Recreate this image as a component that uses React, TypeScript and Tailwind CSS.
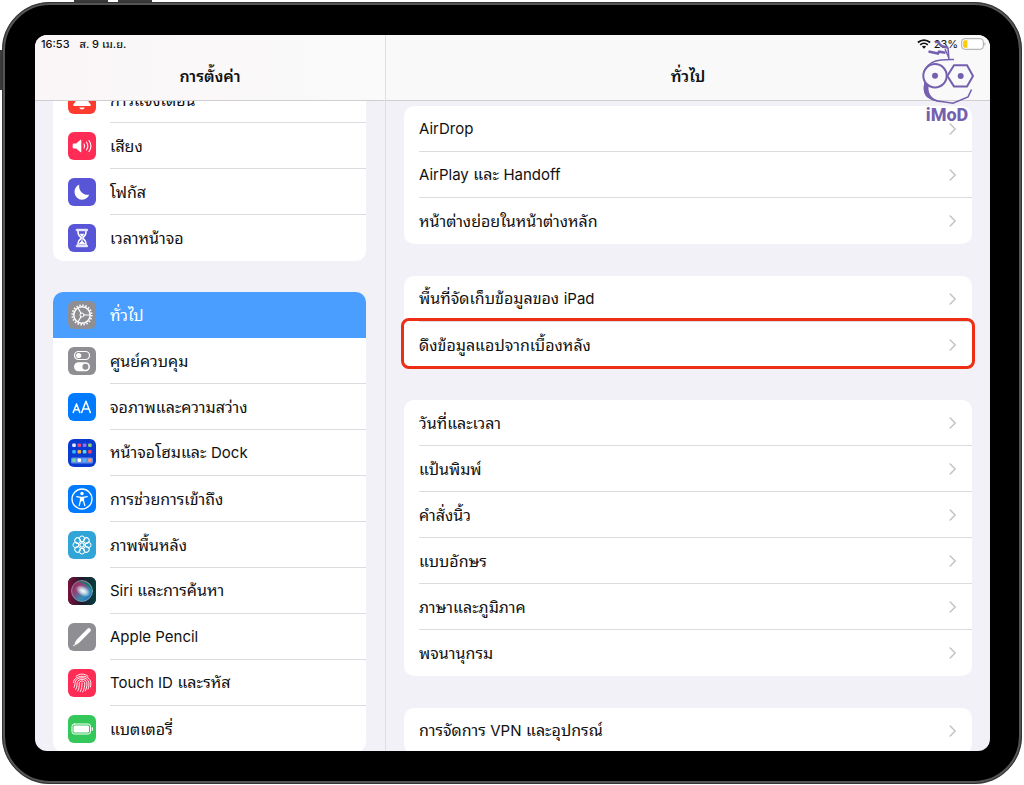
import React from 'react';
import clsx from 'clsx';

interface IconProps {
  children: React.ReactNode;
  className?: string;
}

const Tile: React.FC<IconProps> = ({ children, className }) => (
  <svg
    viewBox="0 0 28 28"
    className={clsx('size-7 shrink-0 rounded-md', className)}
    fill="none"
    stroke="#fff"
    strokeLinecap="round"
    strokeLinejoin="round"
    aria-hidden="true"
  >
    {children}
  </svg>
);

const BellIcon = () => (
  <Tile className="bg-[#ff3b30]">
    <path
      d="M14 4.5c-4 0-5.5 3-5.5 6.500 0 4-1.500 5.500-3 7.200-.6.700-.2 1.800.8 1.800h15.400c1 0 1.400-1.100.8-1.800-1.500-1.700-3-3.200-3-7.200 0-3.500-1.500-6.500-5.500-6.500z"
      fill="#fff"
      stroke="none"
    />
    <path d="M11.300 21.500h5.400c-.4 1.300-1.400 2-2.700 2s-2.300-.7-2.700-2z" fill="#fff" stroke="none" />
  </Tile>
);

const SoundIcon = () => (
  <Tile className="bg-[#ff2d55]">
    <path
      d="M5.500 11.500h2.700l4.100-3.600c.5-.4 1-.2 1 .5v11.200c0 .7-.5.900-1 .5l-4.100-3.600H5.500c-.5 0-.8-.3-.8-.8v-3.400c0-.5.300-.8.800-.8z"
      fill="#fff"
      stroke="none"
    />
    <path d="M16 12c.8 1.200.8 2.800 0 4M18.500 10.200c1.600 2.300 1.600 5.300 0 7.600M21 8.500c2.400 3.400 2.400 7.600 0 11" strokeWidth="1.100" />
  </Tile>
);

const MoonIcon = () => (
  <Tile className="bg-[#5856d6]">
    <path
      d="M11.200 6.500c-.8 6 3.300 11 10 10.300-1.200 3-3.800 4.900-7 4.900A7.800 7.800 0 0 1 6.500 14c0-3.400 1.900-6.400 4.700-7.500z"
      fill="#fff"
      stroke="none"
    />
  </Tile>
);

const HourglassIcon = () => (
  <Tile className="bg-[#5856d6]">
    <path d="M8.500 5.200h11v1.600h-11zM8.500 21.200h11v1.600h-11z" fill="#fff" strokeWidth=".6" />
    <path
      d="M10 7.500c0 3 .7 4.300 2.600 5.700.6.500.6 1.100 0 1.600-1.900 1.400-2.600 2.700-2.600 5.700M18 7.500c0 3-.7 4.300-2.600 5.700-.6.500-.6 1.100 0 1.600 1.900 1.400 2.600 2.700 2.600 5.700"
      strokeWidth="1.500"
    />
    <path d="M11.800 9.700h4.400c-.4 1.200-1 2-2.200 2.800-1.200-.8-1.800-1.600-2.200-2.800zM13.500 12h1v5l2.500 2.500v1h-6v-1l2.500-2.500z" fill="#fff" stroke="none" />
  </Tile>
);

const GearIcon = () => (
  <Tile className="bg-[#8e8e93]">
    <circle cx="14" cy="14" r="9.700" strokeWidth="1.800" strokeDasharray="1.500 1.547" strokeLinecap="butt" />
    <circle cx="14" cy="14" r="8.200" strokeWidth="1.500" />
    <circle cx="14" cy="14" r="2" strokeWidth="1" />
    <path d="M16 14h5.800M13 12.300 10.100 7.200M13 15.700l-2.900 5.100" strokeWidth="1.200" />
  </Tile>
);

const TogglesIcon = () => (
  <Tile className="bg-[#8e8e93]">
    <rect x="6.500" y="4.500" width="15" height="8" rx="4" strokeWidth="1.200" />
    <circle cx="10.700" cy="8.500" r="2.600" fill="#fff" stroke="none" />
    <rect x="6" y="15.200" width="16" height="9" rx="4.500" fill="#fff" stroke="none" />
    <circle cx="17.400" cy="19.700" r="3" fill="#8e8e93" stroke="none" />
  </Tile>
);

const DisplayIcon = () => (
  <Tile className="bg-[#007aff]">
    <path d="m5.200 19.500 3.300-8.500 3.300 8.500M6.300 16.700h4.400M13.700 19.500 18 8.300l4.300 11.200M15.100 16h5.800" strokeWidth="1.500" />
  </Tile>
);

const appRows = [
  { y: 4.5, colors: ['#e8e8ff', '#e5487c', '#9b6cf0', '#8fd06c'] },
  { y: 11, colors: ['#38b6ff', '#ffb13d', '#5ad8e8', '#ff3f5e'] },
  { y: 19.5, colors: ['#71d99a', '#ffffff', '#48b9ff', '#ff9472'] },
];

const HomeScreenIcon = () => (
  <Tile className="bg-[#0a3bd0]">
    <rect x="3" y="18.500" width="22" height="6" rx="1.500" fill="#5f8bea" stroke="none" />
    {appRows.map((row) =>
      row.colors.map((color, i) => (
        <rect key={color} x={4.2 + i * 5.3} y={row.y} width="3.600" height="3.600" rx="1" fill={color} stroke="none" />
      ))
    )}
  </Tile>
);

const AccessibilityIcon = () => (
  <Tile className="bg-[#007aff]">
    <circle cx="14" cy="14" r="10" strokeWidth="1.300" />
    <circle cx="14" cy="8.500" r="1.700" fill="#fff" stroke="none" />
    <path d="m8.800 11.600 3.700.8v3.300l-1.300 5M19.200 11.600l-3.700.8v3.300l1.300 5" strokeWidth="1.300" />
    <path d="M12.300 11.800h3.400v4.500h-3.400z" fill="#fff" stroke="none" />
  </Tile>
);

const WallpaperIcon = () => (
  <Tile className="bg-[#32a5d8]">
    <circle cx="14" cy="14" r="2.200" strokeWidth="1" />
    {[0, 45, 90, 135, 180, 225, 270, 315].map((angle) => (
      <g key={angle} transform={`rotate(${angle} 14 14)`}>
        <ellipse cx="14" cy="7.800" rx="2.700" ry="2.900" strokeWidth="1" />
        <path d="M14 10.500v1.500" strokeWidth=".8" />
      </g>
    ))}
  </Tile>
);

const SiriIcon = () => (
  <Tile className="bg-[#14222e]">
    <defs>
      <linearGradient id="siri-bg" x1="0" y1="0" x2="1" y2="0">
        <stop offset="0" stopColor="#7d0f3c" />
        <stop offset=".5" stopColor="#1c1a2c" />
        <stop offset="1" stopColor="#063f3d" />
      </linearGradient>
      <linearGradient id="siri-orb" x1="0" y1="0" x2="1" y2="1">
        <stop offset="0" stopColor="#a5184c" />
        <stop offset=".4" stopColor="#8a4a80" />
        <stop offset=".65" stopColor="#368fb5" />
        <stop offset="1" stopColor="#2260c8" />
      </linearGradient>
      <radialGradient id="siri-glow">
        <stop offset="0" stopColor="#fff" />
        <stop offset=".4" stopColor="#e3f2fa" stopOpacity=".8" />
        <stop offset="1" stopColor="#fff" stopOpacity="0" />
      </radialGradient>
    </defs>
    <rect width="28" height="28" fill="url(#siri-bg)" stroke="none" />
    <circle cx="14" cy="14" r="10.500" fill="url(#siri-orb)" stroke="#8fb7b9" strokeWidth=".7" />
    <path d="M10 5c7 1 12 5 14 9-1-6-6-11-14-9z" fill="#137d68" stroke="none" />
    <ellipse cx="15" cy="14" rx="8" ry="5" fill="url(#siri-glow)" stroke="none" transform="rotate(30 15 14)" />
  </Tile>
);

const PencilIcon = () => (
  <Tile className="bg-[#8e8e93]">
    <path d="M10 18.200 20.900 7.200" strokeWidth="4" />
    <path d="m7.500 18 2.900 2.700-3.200 1.400c-.5.200-.8-.1-.6-.6z" fill="#fff" stroke="none" />
    <circle cx="6" cy="22.500" r=".8" fill="#fff" stroke="none" />
  </Tile>
);

const FingerprintIcon = () => (
  <Tile className="bg-[#ff2d55]">
    <g strokeWidth=".9">
      <path d="M8 7.300c3.600-3 8.400-3 12 0" />
      <path d="M5.400 13.500C6 5.200 22 5.200 22.800 13.500c.1 1.500 0 3-.3 4.500" />
      <path d="M6 18.500c1-2 .8-3.500 1.200-5.300 1.200-6 12.400-6 13.600.3.300 2.200 0 4.400-.7 6.500" />
      <path d="M7.700 20.500c1.600-2.500 1.100-4.700 1.500-6.800.9-4.500 8.700-4.500 9.600 0 .4 2.800-.2 5.600-1.400 8" />
      <path d="M9.800 22c1.600-2.800 1.300-5.300 1.500-7.800.4-3 5-3 5.400 0 .2 3-.5 6-1.900 8.700" />
      <path d="M12.200 22.700c1.600-2.700 1.800-5.600 1.800-8.700" />
    </g>
  </Tile>
);

const BatteryTileIcon = () => (
  <Tile className="bg-[#34c759]">
    <rect x="4" y="9" width="18.500" height="10" rx="2.300" strokeWidth="1" />
    <rect x="5.500" y="10.500" width="15.500" height="7" rx="1.200" fill="#fff" stroke="none" />
    <path d="M24.300 12.800v2.400" strokeWidth="1.200" />
  </Tile>
);

const WifiIcon = () => (
  <svg viewBox="0 0 14 10" className="h-[10px] w-[14px]" fill="none" stroke="#111" strokeWidth="1.800" aria-label="Wi-Fi">
    <path d="M.9 3.500c3.500-3.300 8.700-3.300 12.200 0M3.200 5.800c2.200-2 5.400-2 7.600 0" />
    <path d="M7 9.700 4.900 7.600c1.200-1.100 3-1.100 4.200 0z" fill="#111" stroke="none" />
  </svg>
);

const StatusBatteryIcon = () => (
  <svg viewBox="0 0 25 12" className="h-3 w-[25px]" fill="none" aria-hidden="true">
    <rect x=".7" y=".7" width="21.600" height="10.600" rx="3" fill="#fff" stroke="#a5a5a5" strokeWidth="1" />
    <path d="M4 2.200h2.400v7.600H4c-1.200 0-1.900-.7-1.900-1.900V4.100c0-1.200.7-1.900 1.900-1.900z" fill="#fccc0a" />
    <path d="M23.500 4.300c1.300.5 1.300 2.900 0 3.400z" fill="#a5a5a5" />
  </svg>
);

const Chevron = () => (
  <svg viewBox="0 0 8 12" className="h-3 w-2 shrink-0" fill="none" stroke="#c4c4c7" strokeWidth="1.600" aria-hidden="true">
    <path d="m1.200 1 5 5-5 5" strokeLinecap="round" strokeLinejoin="round" />
  </svg>
);

const Watermark = () => (
  <div className="pointer-events-none absolute top-[5px] right-[16px] z-20 flex w-[54px] flex-col items-center text-[#7460ae]">
    <svg viewBox="0 0 54 66" className="h-[66px] w-[54px]" fill="none" stroke="currentColor" strokeWidth="2" aria-hidden="true">
      <circle cx="15" cy="35.700" r="11.700" />
      <path d="M27.300 36 34 25.200h13l6 10.800-6 10.400H34z" />
      <circle cx="15" cy="35.700" r="3" fill="currentColor" stroke="none" />
      <circle cx="40.700" cy="36" r="3" fill="currentColor" stroke="none" />
      <path d="M5 29.500c3-5.500 9-8.800 16-9.500 4-.4 8-.8 13-.5" strokeWidth="1.500" />
      <path d="M28.900 19.500 28 7.500" strokeWidth="1.600" />
      <path d="M15 2.500c2.500-1.500 4 0 5 2 1.300 2 4 2.500 8 3" strokeWidth="2.300" />
      <path d="m8.500 11.500 9.500 2 1-1.800 6.500 1" strokeWidth="2.500" />
      <path d="m25 9 3.500 8" strokeWidth="1.400" />
      <path d="M5.500 43C4 47 4.300 52 6.700 55.500c2.500 3 7 4.300 11.300 5.500l15 2.300 15-6.300 3.500-7.500" strokeWidth="1.600" />
      <path d="M4.500 42c-1.500 5-.8 10.500 1.500 14 3 3.500 9 5.500 15 6.500-7-3.500-13.500-6-12.500-17z" fill="currentColor" stroke="none" />
    </svg>
    <span className="font-['Roboto','Liberation_Sans',sans-serif] text-lg leading-[18px] font-extrabold">iMoD</span>
  </div>
);

// Thai glyphs run small next to Latin ones, so Latin runs are set a step down.
const Label: React.FC<{ text: string }> = ({ text }) => (
  <span className="text-base">
    {text.split(/([A-Za-z]+(?: [A-Za-z]+)*)/).map((part, i) =>
      i % 2 === 1 ? (
        <span key={i} className="text-[15px]">
          {part}
        </span>
      ) : (
        part
      )
    )}
  </span>
);

interface NavItem {
  label: string;
  icon: React.FC;
  active?: boolean;
}

const navGroups: NavItem[][] = [
  [
    { label: 'การแจ้งเตือน', icon: BellIcon },
    { label: 'เสียง', icon: SoundIcon },
    { label: 'โฟกัส', icon: MoonIcon },
    { label: 'เวลาหน้าจอ', icon: HourglassIcon },
  ],
  [
    { label: 'ทั่วไป', icon: GearIcon, active: true },
    { label: 'ศูนย์ควบคุม', icon: TogglesIcon },
    { label: 'จอภาพและความสว่าง', icon: DisplayIcon },
    { label: 'หน้าจอโฮมและ Dock', icon: HomeScreenIcon },
    { label: 'การช่วยการเข้าถึง', icon: AccessibilityIcon },
    { label: 'ภาพพื้นหลัง', icon: WallpaperIcon },
    { label: 'Siri และการค้นหา', icon: SiriIcon },
    { label: 'Apple Pencil', icon: PencilIcon },
    { label: 'Touch ID และรหัส', icon: FingerprintIcon },
    { label: 'แบตเตอรี่', icon: BatteryTileIcon },
  ],
];

const settingGroups: string[][] = [
  ['AirDrop', 'AirPlay และ Handoff', 'หน้าต่างย่อยในหน้าต่างหลัก'],
  ['พื้นที่จัดเก็บข้อมูลของ iPad', 'ดึงข้อมูลแอปจากเบื้องหลัง'],
  ['วันที่และเวลา', 'แป้นพิมพ์', 'คำสั่งนิ้ว', 'แบบอักษร', 'ภาษาและภูมิภาค', 'พจนานุกรม'],
  ['การจัดการ VPN และอุปกรณ์'],
];

const HIGHLIGHTED = 'ดึงข้อมูลแอปจากเบื้องหลัง';

const NavRow: React.FC<{ item: NavItem; last: boolean }> = ({ item, last }) => {
  const Icon = item.icon;
  return (
    <button
      type="button"
      className={clsx(
        'flex h-[46px] w-full items-center gap-[14px] pl-[15px] text-left',
        item.active && 'rounded-t-[10px] bg-[#4a9eff] text-white'
      )}
    >
      <Icon />
      <span
        className={clsx(
          'flex h-full flex-1 items-center border-b',
          last || item.active ? 'border-transparent' : 'border-[#dcdcde]'
        )}
      >
        <Label text={item.label} />
      </span>
    </button>
  );
};

const SettingRow: React.FC<{ label: string; last: boolean }> = ({ label, last }) => (
  <button type="button" className="relative flex h-[46px] w-full pl-[15px] text-left">
    <span
      className={clsx(
        'flex h-full flex-1 items-center justify-between border-b pr-[15px]',
        last ? 'border-transparent' : 'border-[#dcdcde]'
      )}
    >
      <Label text={label} />
      <Chevron />
    </span>
    {label === HIGHLIGHTED && (
      <span className="absolute -inset-x-[3px] -top-1 -bottom-px rounded-lg border-3 border-[#ee2e14]" />
    )}
  </button>
);

const Sidebar = () => (
  <aside className="flex w-[351px] shrink-0 flex-col border-r border-[#dfdfe3]">
    <header className="relative z-10 h-[66px] shrink-0 border-b border-[#cfcfd2] bg-gradient-to-r from-[#faf6f7] to-[#fafafa]">
      <p className="flex h-[18px] items-center gap-[10px] pl-[6px] text-[11px] font-medium">
        <span>16:53</span>
        <span>ส. 9 เม.ย.</span>
      </p>
      <h2 className="flex h-[46px] items-center justify-center text-base font-semibold">การตั้งค่า</h2>
    </header>
    <nav className="-mt-6 flex flex-col gap-[31px] pr-[19px] pl-[18px]">
      {navGroups.map((group, i) => (
        <div key={i} className="rounded-[10px] bg-white">
          {group.map((item, j) => (
            <NavRow key={item.label} item={item} last={i === 0 && j === group.length - 1} />
          ))}
        </div>
      ))}
    </nav>
  </aside>
);

const Detail = () => (
  <main className="flex min-w-0 flex-1 flex-col">
    <header className="h-[66px] shrink-0 border-b border-[#cfcfd2] bg-[#f9f9f9]">
      <div className="flex h-[18px] items-center justify-end gap-[3px] pr-[4px] text-[11px]">
        <WifiIcon />
        <span>23%</span>
        <StatusBatteryIcon />
      </div>
      <h1 className="flex h-[46px] items-center justify-center text-base font-semibold">ทั่วไป</h1>
    </header>
    <div className="flex flex-col gap-8 px-[18px] pt-[5px]">
      {settingGroups.map((group, i) => (
        <section key={i} className="rounded-[10px] bg-white">
          {group.map((label, j) => (
            <SettingRow key={label} label={label} last={j === group.length - 1} />
          ))}
        </section>
      ))}
    </div>
  </main>
);

export default function App() {
  return (
    <div className="relative flex h-screen bg-white p-[2px] pb-px font-['Inter','Noto_Sans_Thai_Looped','Loma','Garuda','Waree','Noto_Sans_Thai',sans-serif] text-[15px] leading-5 text-[#111]">
      <span className="absolute top-0 left-[74px] h-1 w-[34px] bg-[#3a3a3a]" />
      <span className="absolute top-0 left-[118px] h-1 w-[34px] bg-[#3a3a3a]" />
      <span className="absolute top-[50px] left-0 h-10 w-1 bg-[#3a3a3a]" />
      <div className="relative flex min-w-0 flex-1 rounded-[48px] border-3 border-[#555] bg-black pt-[30px] pr-[29px] pb-[30px] pl-[30px] outline-1 -outline-offset-1 outline-[#333]">
        <div className="relative flex min-w-0 flex-1 overflow-hidden rounded-xl bg-[#f2f1f7]">
          <Sidebar />
          <Detail />
          <Watermark />
        </div>
      </div>
    </div>
  );
}
